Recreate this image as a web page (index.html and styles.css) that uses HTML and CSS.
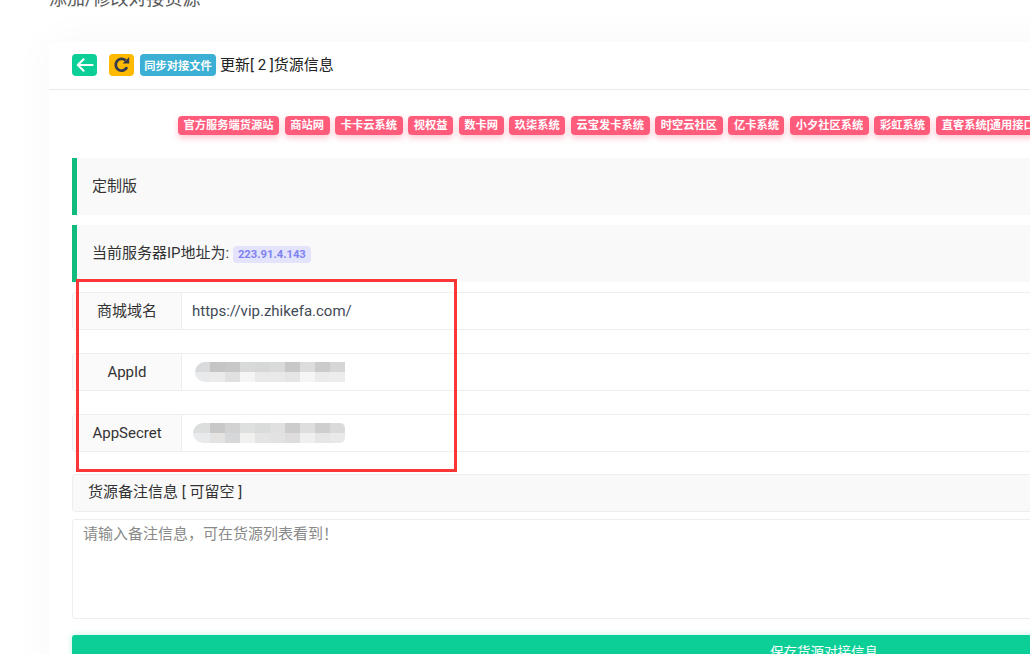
FILE: index.html
```html
<!DOCTYPE html>
<html lang="zh-CN">
<head>
    <meta charset="UTF-8">
    <title>添加/修改对接货源</title>
    <link rel="stylesheet" href="styles.css">
</head>
<body>
    <div class="page">
        <h4 class="page-title">添加/修改对接货源</h4>
        <div class="card">
            <div class="card-header">
                <a class="icon-btn back">
                    <svg width="18" height="16" viewBox="0 0 18 16"><path d="M7.6 2.2 1.8 8l5.8 5.8M2 8h14.6" fill="none" stroke="#fff" stroke-width="2" stroke-linecap="round" stroke-linejoin="round"/></svg>
                </a>
                <a class="icon-btn refresh">
                    <svg width="18" height="18" viewBox="0 0 18 18"><path d="M14 11.2A5.9 5.9 0 1 1 12.6 4.4" fill="none" stroke="#343a4b" stroke-width="2.8"/><path d="M9.6 7.6h6.6V1z" fill="#343a4b"/></svg>
                </a>
                <a class="sync-btn">同步对接文件</a>
                <span class="card-title">更新[ 2 ]货源信息</span>
            </div>
            <div class="card-body">
                <div class="tags">
                    <span class="tag">官方服务端货源站</span>
                    <span class="tag">商站网</span>
                    <span class="tag">卡卡云系统</span>
                    <span class="tag">视权益</span>
                    <span class="tag">数卡网</span>
                    <span class="tag">玖柒系统</span>
                    <span class="tag">云宝发卡系统</span>
                    <span class="tag">时空云社区</span>
                    <span class="tag">亿卡系统</span>
                    <span class="tag">小夕社区系统</span>
                    <span class="tag">彩虹系统</span>
                    <span class="tag">直客系统[通用接口]</span>
                </div>
                <div class="note">定制版</div>
                <div class="note">当前服务器IP地址为: <span class="ip">223.91.4.143</span></div>
                <div class="field">
                    <label class="field-label">商城域名</label>
                    <div class="field-value">https://vip.zhikefa.com/</div>
                </div>
                <div class="field">
                    <label class="field-label">AppId</label>
                    <div class="field-value">
                        <svg class="mosaic" width="150" height="20" viewBox="0 0 150 20">
                            <path fill="#d9dadc" d="M10 0h5v10H0a10 10 0 0 1 10-10z"/>
                            <rect x="15" width="15" height="10" fill="#c5c5c5"/><rect x="30" width="15" height="10" fill="#c8c8c8"/>
                            <rect x="45" width="15" height="10" fill="#d8d9d9"/><rect x="60" width="15" height="10" fill="#d6d7d7"/>
                            <rect x="75" width="15" height="10" fill="#d9dada"/><rect x="90" width="15" height="10" fill="#c8c8c8"/>
                            <rect x="105" width="15" height="10" fill="#dcdcdc"/><rect x="120" width="15" height="10" fill="#cbcbcb"/>
                            <rect x="135" width="15" height="10" fill="#d6d6d6"/>
                            <path fill="#e8e9eb" d="M0 10h15v10H10A10 10 0 0 1 0 10z"/>
                            <rect x="15" y="10" width="15" height="10" fill="#ebebeb"/><rect x="30" y="10" width="15" height="10" fill="#e0e0e0"/>
                            <rect x="45" y="10" width="15" height="10" fill="#f5f5f5"/><rect x="60" y="10" width="15" height="10" fill="#e9e9e9"/>
                            <rect x="75" y="10" width="15" height="10" fill="#e9e9e9"/><rect x="90" y="10" width="15" height="10" fill="#e5e5e5"/>
                            <rect x="105" y="10" width="15" height="10" fill="#f5f5f5"/><rect x="120" y="10" width="15" height="10" fill="#ebebeb"/>
                            <rect x="135" y="10" width="15" height="10" fill="#ececec"/>
                        </svg>
                    </div>
                </div>
                <div class="field">
                    <label class="field-label">AppSecret</label>
                    <div class="field-value">
                        <svg class="mosaic mosaic-wide" width="152" height="20" viewBox="0 0 152 20">
                            <path fill="#dcdddd" d="M10 0h7v10H0a10 10 0 0 1 10-10z"/>
                            <rect x="17" width="15" height="10" fill="#c8c8c8"/><rect x="32" width="15" height="10" fill="#d2d2d2"/>
                            <rect x="47" width="15" height="10" fill="#dedfdf"/><rect x="62" width="15" height="10" fill="#dadbdb"/>
                            <rect x="77" width="15" height="10" fill="#e0e0e0"/><rect x="92" width="15" height="10" fill="#cccccc"/>
                            <rect x="107" width="15" height="10" fill="#dedede"/><rect x="122" width="15" height="10" fill="#cecece"/>
                            <path fill="#dadada" d="M137 0h10a5 5 0 0 1 5 5v5h-15z"/>
                            <path fill="#e9eaec" d="M0 10h17v10H10A10 10 0 0 1 0 10z"/>
                            <rect x="17" y="10" width="15" height="10" fill="#e4e3e1"/><rect x="32" y="10" width="15" height="10" fill="#d5d7d9"/>
                            <rect x="47" y="10" width="15" height="10" fill="#f1f1f0"/><rect x="62" y="10" width="15" height="10" fill="#e4e4e4"/>
                            <rect x="77" y="10" width="15" height="10" fill="#e2e2e2"/><rect x="92" y="10" width="15" height="10" fill="#dedcdc"/>
                            <rect x="107" y="10" width="15" height="10" fill="#efefef"/><rect x="122" y="10" width="15" height="10" fill="#e6e6e6"/>
                            <path fill="#e9e9e9" d="M137 10h15v5a5 5 0 0 1-5 5h-10z"/>
                        </svg>
                    </div>
                </div>
                <div class="remark-label">货源备注信息 [ 可留空 ]</div>
                <textarea class="remark" placeholder="请输入备注信息，可在货源列表看到！"></textarea>
                <button class="save-btn">保存货源对接信息</button>
            </div>
        </div>
    </div>
    <div class="annotation"></div>
</body>
</html>
```

FILE: styles.css
```css
html, body {
    margin: 0;
    padding: 0;
    height: 654px;
    overflow: hidden;
}
body {
    background-color: #fff;
    color: #2d2d2d;
    font-family: Roboto, "Noto Sans CJK SC", sans-serif;
    font-size: 15px;
    position: relative;
}
.page {
    width: 1600px;
    padding-left: 49px;
    box-sizing: border-box;
}
.page-title {
    margin: -13px 0 0;
    height: 55px;
    font-size: 18px;
    font-weight: 400;
    line-height: 24px;
    color: #5a5a5a;
}
.card {
    width: 1550px;
    background: #fff;
    border-radius: 3px;
    box-shadow: 0 0 45px rgba(0,0,0,0.035);
}
.card-header {
    display: flex;
    align-items: flex-start;
    height: 48px;
    padding: 12px 0 0 23px;
    box-sizing: border-box;
    border-bottom: 1px solid #e8eaec;
}
.icon-btn {
    width: 25px;
    height: 22px;
    border-radius: 4px;
    display: flex;
    align-items: center;
    justify-content: center;
    margin-right: 12px;
}
.back {
    background: #0bcf97;
}
.refresh {
    background: #ffb900;
    margin-right: 6px;
}
.sync-btn {
    width: 76px;
    height: 22px;
    border-radius: 4px;
    background: #3bafd4;
    color: #fff;
    font-size: 11.25px;
    font-weight: 700;
    line-height: 25px;
    text-align: center;
    margin-right: 4px;
}
.card-title {
    font-size: 15px;
    line-height: 22px;
    color: #222;
}
.card-body {
    padding: 26px 23px 0;
}
.tags {
    display: flex;
    gap: 5.75px;
    padding-left: 106px;
    height: 19px;
    margin-bottom: 23px;
}
.tag {
    flex: none;
    height: 19px;
    padding: 0 5.5px;
    border-radius: 4px;
    background: #ff5c7c;
    color: #fff;
    font-size: 11.25px;
    font-weight: 700;
    line-height: 19px;
    box-shadow: 0 3px 6px rgba(255,92,124,0.35);
}
.note {
    height: 57px;
    margin-bottom: 10px;
    padding-left: 15px;
    border-left: 5px solid #10bc7d;
    background: #f9f9f9;
    line-height: 56px;
    color: #333;
}
.ip {
    display: inline-block;
    height: 17px;
    padding: 0 5px;
    border-radius: 4px;
    background: #e3e4fb;
    color: #7f83f2;
    font-size: 11.25px;
    font-weight: 700;
    line-height: 17px;
}
.field {
    display: flex;
    height: 38px;
    margin-bottom: 23px;
    border: 1px solid #eee;
    border-radius: 3px;
    box-sizing: border-box;
}
.field-label {
    flex: none;
    width: 109px;
    box-sizing: border-box;
    border-right: 1px solid #eee;
    background: #fafafa;
    text-align: center;
    line-height: 36px;
    color: #333;
}
.field-value {
    flex: 1;
    padding-left: 10px;
    line-height: 36px;
    color: #3f4a56;
    display: flex;
    align-items: center;
}
.mosaic {
    flex: none;
    margin-left: 3px;
}
.mosaic-wide {
    margin-left: 1px;
}
.remark-label {
    height: 38px;
    margin-top: -1px;
    padding-left: 15px;
    box-sizing: border-box;
    border: 1px solid #eee;
    border-radius: 3px;
    background: #f9f9f9;
    line-height: 34px;
    color: #333;
}
.remark {
    display: block;
    width: 100%;
    height: 100px;
    margin: 7px 0 16px;
    padding: 3px 10px;
    box-sizing: border-box;
    border: 1px solid #eee;
    border-radius: 3px;
    outline: none;
    resize: none;
    font-family: Roboto, "Noto Sans CJK SC", sans-serif;
    font-size: 15px;
    line-height: 22px;
}
.remark::placeholder {
    color: #8a8a8a;
}
.save-btn {
    display: block;
    width: 100%;
    height: 40px;
    border: 0;
    border-radius: 3px;
    background: #0bcf97;
    color: #fff;
    font-family: Roboto, "Noto Sans CJK SC", sans-serif;
    font-size: 13.5px;
    line-height: 34px;
    padding: 0 0 6px;
    box-shadow: 0 0 6px rgba(11,207,151,0.25);
}
/* red box drawn on top of the screenshot */
.annotation {
    position: absolute;
    left: 76px;
    top: 279px;
    width: 381px;
    height: 193px;
    box-sizing: border-box;
    border: 3px solid #fb3636;
}
```
